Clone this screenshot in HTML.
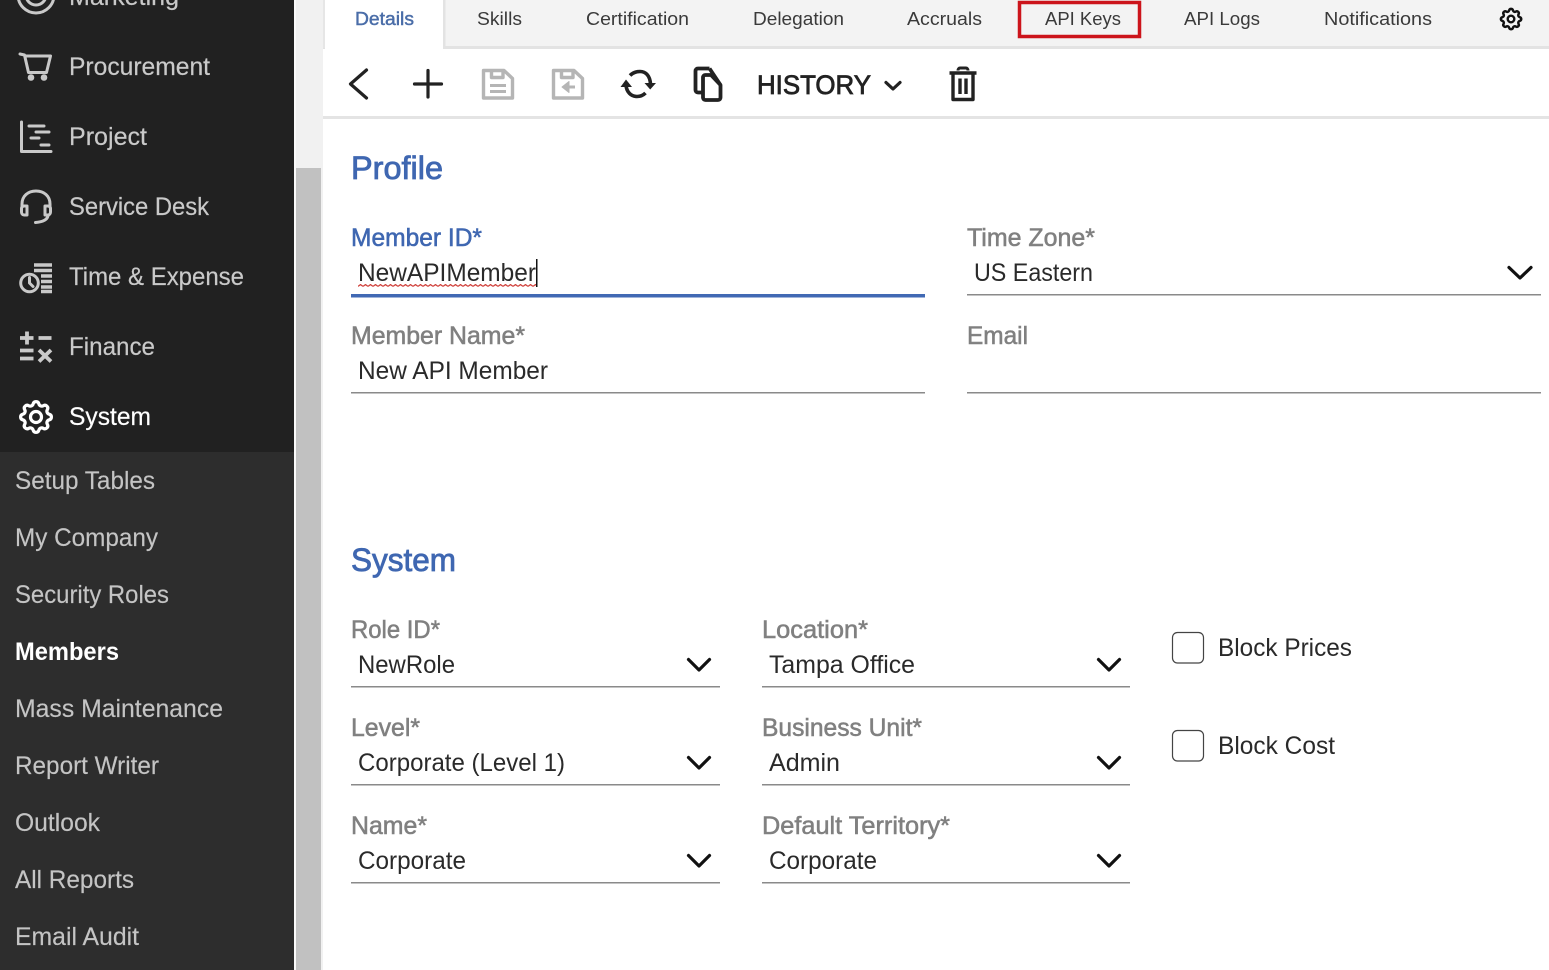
<!DOCTYPE html>
<html><head><meta charset="utf-8"><title>Members</title>
<style>
html,body{margin:0;padding:0;background:#fff;width:1549px;height:970px;overflow:hidden}
svg{display:block}
text{font-family:"Liberation Sans",Arial,sans-serif}
.nav{font-size:25px;fill:#c9c9c9;stroke:#c9c9c9;stroke-width:.2px}
.sub{font-size:25px;fill:#c4c4c4;stroke:#c4c4c4;stroke-width:.15px}
.tab{font-size:18.500px;fill:#3a3a3a}
.lab{font-size:25px;fill:#808080;stroke:#808080;stroke-width:.55px}
.val{font-size:25px;fill:#2a2a2a}
.h{font-size:32px;fill:#3f67b1;stroke:#3f67b1;stroke-width:.8px}
.ln{fill:#8a8a8a}
.chev{fill:none;stroke:#111;stroke-width:3.200;stroke-linecap:round;stroke-linejoin:round}
</style></head><body>
<svg xmlns="http://www.w3.org/2000/svg" width="1549" height="970" viewBox="0 0 1549 970">
<defs>
<path id="gear" d="M10.325 4.317c.426-1.756 2.924-1.756 3.35 0a1.724 1.724 0 0 0 2.573 1.066c1.543-.94 3.31.826 2.37 2.37a1.724 1.724 0 0 0 1.065 2.572c1.756.426 1.756 2.924 0 3.35a1.724 1.724 0 0 0-1.066 2.573c.94 1.543-.826 3.31-2.37 2.37a1.724 1.724 0 0 0-2.572 1.065c-.426 1.756-2.924 1.756-3.35 0a1.724 1.724 0 0 0-2.573-1.066c-1.543.94-3.31-.826-2.37-2.37a1.724 1.724 0 0 0-1.065-2.572c-1.756-.426-1.756-2.924 0-3.35a1.724 1.724 0 0 0 1.066-2.573c-.94-1.543.826-3.31 2.37-2.37c1 .608 2.296.07 2.572-1.065z"/>
<pattern id="sq" x="358" y="284" width="5" height="3" patternUnits="userSpaceOnUse"><path d="M0 2.400L2.500 .6L5 2.400" fill="none" stroke="#d0403a" stroke-width="1.300"/></pattern>
</defs>

<!-- sidebar -->
<rect x="0" y="0" width="294" height="970" fill="#212121"/>
<rect x="0" y="452" width="294" height="518" fill="#2d2d2d"/>
<!-- scrollbar -->
<rect x="294" y="0" width="29" height="970" fill="#f1f1f1"/>
<rect x="294" y="0" width="2" height="970" fill="#fafafa"/>
<rect x="296" y="168" width="25" height="802" fill="#c1c1c1"/>

<!-- sidebar icons -->
<g fill="none" stroke="#c9c9c9" stroke-width="3" stroke-linecap="round" stroke-linejoin="round">
  <circle cx="36" cy="-5" r="18"/><circle cx="36" cy="-5" r="10"/>
  <path d="M20 54L24.500 55L28.500 72.500H46.500L50.500 56H25"/>
  <path d="M21.500 122V151.500H51"/>
  <path d="M29 126H44M36 132H49M31 138H39M41 145H49"/>
  <path d="M22 207V204C22 196 28 191 36 191S50 196 50 204V207"/>
  <path d="M27 206H24C22.500 206 21.500 207 21.500 208.500V212C21.500 213.500 22.500 215 24 215H27Z"/>
  <path d="M45 206H48C49.500 206 50.500 207 50.500 208.500V212C50.500 213.500 49.500 215 48 215H45Z"/>
  <path d="M48 216C47 220 42 222 35.500 222.500"/>
  <circle cx="29.500" cy="283" r="8.800"/><path d="M29.500 277.500V283L33 286.500"/>
  <path d="M34 265H52M34 270.500H52M41 276H52M41 281.500H52M41 287H52M41 291.500H52" stroke-width="3.400" stroke-linecap="butt"/>
  <path d="M20 338H33.500M27 331.500V344.500M38.500 338H51.500M20 350.500H33.500M20 358.500H33.500M39 350L51 361.500M51 350L39 361.500" stroke-width="3.800" stroke-linecap="butt"/>
</g>
<circle cx="31" cy="77.500" r="3.300" fill="#c9c9c9"/>
<circle cx="44" cy="77.500" r="3.300" fill="#c9c9c9"/>
<use href="#gear" transform="translate(15.500 396.500) scale(1.71)" fill="none" stroke="#fff" stroke-width="1.900"/>
<circle cx="36" cy="417" r="5.500" fill="none" stroke="#fff" stroke-width="3.200"/>

<!-- sidebar text -->
<text class="nav" x="69" y="5" textLength="110" lengthAdjust="spacingAndGlyphs">Marketing</text>
<text class="nav" x="69" y="75" textLength="141" lengthAdjust="spacingAndGlyphs">Procurement</text>
<text class="nav" x="69" y="145" textLength="78" lengthAdjust="spacingAndGlyphs">Project</text>
<text class="nav" x="69" y="215" textLength="140" lengthAdjust="spacingAndGlyphs">Service Desk</text>
<text class="nav" x="69" y="285" textLength="175" lengthAdjust="spacingAndGlyphs">Time &amp; Expense</text>
<text class="nav" x="69" y="355" textLength="86" lengthAdjust="spacingAndGlyphs">Finance</text>
<text class="nav" x="69" y="425" textLength="82" lengthAdjust="spacingAndGlyphs" style="fill:#fff;stroke:#fff">System</text>

<text class="sub" x="15" y="489" textLength="140" lengthAdjust="spacingAndGlyphs">Setup Tables</text>
<text class="sub" x="15" y="546" textLength="143" lengthAdjust="spacingAndGlyphs">My Company</text>
<text class="sub" x="15" y="603" textLength="154" lengthAdjust="spacingAndGlyphs">Security Roles</text>
<text class="sub" x="15" y="660" textLength="104" lengthAdjust="spacingAndGlyphs" style="fill:#fff;stroke:none;font-weight:bold">Members</text>
<text class="sub" x="15" y="717" textLength="208" lengthAdjust="spacingAndGlyphs">Mass Maintenance</text>
<text class="sub" x="15" y="774" textLength="144" lengthAdjust="spacingAndGlyphs">Report Writer</text>
<text class="sub" x="15" y="831" textLength="85" lengthAdjust="spacingAndGlyphs">Outlook</text>
<text class="sub" x="15" y="888" textLength="119" lengthAdjust="spacingAndGlyphs">All Reports</text>
<text class="sub" x="15" y="945" textLength="124" lengthAdjust="spacingAndGlyphs">Email Audit</text>

<!-- tab bar -->
<rect x="323" y="0" width="1226" height="46" fill="#f3f3f3"/>
<rect x="323" y="46" width="1226" height="3" fill="#e3e3e3"/>
<rect x="323" y="0" width="2" height="48" fill="#e6e6e6"/>
<rect x="325" y="0" width="118" height="49" fill="#fff"/>
<rect x="443" y="0" width="2.500" height="49" fill="#e3e3e3"/>

<text class="tab" x="355" y="25" textLength="59" lengthAdjust="spacingAndGlyphs" style="fill:#4a6da8;stroke:#4a6da8;stroke-width:.45px">Details</text>
<text class="tab" x="477" y="25" textLength="45" lengthAdjust="spacingAndGlyphs">Skills</text>
<text class="tab" x="586" y="25" textLength="103" lengthAdjust="spacingAndGlyphs">Certification</text>
<text class="tab" x="753" y="25" textLength="91" lengthAdjust="spacingAndGlyphs">Delegation</text>
<text class="tab" x="907" y="25" textLength="75" lengthAdjust="spacingAndGlyphs">Accruals</text>
<text class="tab" x="1045" y="25" textLength="76" lengthAdjust="spacingAndGlyphs">API Keys</text>
<text class="tab" x="1184" y="25" textLength="76" lengthAdjust="spacingAndGlyphs">API Logs</text>
<text class="tab" x="1324" y="25" textLength="108" lengthAdjust="spacingAndGlyphs">Notifications</text>
<rect x="1019.500" y="2.500" width="120" height="34" fill="none" stroke="#cc141b" stroke-width="3.500"/>
<use href="#gear" transform="translate(1497.500 5.500) scale(1.13)" fill="none" stroke="#111" stroke-width="2.200"/>
<circle cx="1511" cy="19" r="3.300" fill="none" stroke="#111" stroke-width="2.400"/>

<!-- toolbar -->
<rect x="323" y="116" width="1226" height="3" fill="#e4e4e4"/>
<g fill="none" stroke="#222" stroke-width="3.200" stroke-linecap="round" stroke-linejoin="round">
  <path d="M366.500 70L350.500 84L366.500 98"/>
  <path d="M414.500 84H441.500M428 70.500V97"/>
</g>
<g fill="none" stroke="#b5b5b5" stroke-width="3.400" stroke-linejoin="round">
  <path d="M483.500 70.500H504L512.500 78.500V98H483.500Z"/>
  <path d="M491.500 71V77.500H503V71"/>
  <path d="M490 85.500H506M490 91.500H506" stroke-width="3"/>
  <path d="M553.500 70.500H574L582.500 78.500V98H553.500Z"/>
  <path d="M561.500 71V77.500H573V71"/>
  <path d="M575 87H564" stroke-width="3"/>
  <path d="M569 81.500L562 87L569 92.500Z" fill="#b5b5b5" stroke-width="1"/>
</g>
<g fill="none" stroke="#222" stroke-width="3.600">
  <path d="M630 75.500C633 72.500 637 71.500 640 71.500C646 71.500 650 76 650.500 84"/>
  <path d="M626 85C626.500 92 631 96.500 637 96.500C640 96.500 643 95.500 645.500 93"/>
</g>
<path d="M644.500 83H656L650.200 89.500Z" fill="#222"/>
<path d="M620.500 87H632L626 79.500Z" fill="#222"/>
<g fill="none" stroke="#222" stroke-width="3.800" stroke-linejoin="round">
  <path d="M703 92.500H698C696.500 92.500 695.500 91.500 695.500 90V71C695.500 69.500 696.500 68.500 698 68.500H709.500"/>
  <path d="M703 77.500C703 76 704 75 705.500 75H711L720.500 85V97.500C720.500 99 719.500 100 718 100H705.500C704 100 703 99 703 97.500Z"/>
  <path d="M709.500 68.500L720.500 85"/>
</g>
<text x="757" y="94" textLength="114" lengthAdjust="spacingAndGlyphs" style="font-size:27px;fill:#222;stroke:#222;stroke-width:.8px">HISTORY</text>
<path d="M886 82.500L893 89L900 82.500" fill="none" stroke="#222" stroke-width="3.200" stroke-linecap="round" stroke-linejoin="round"/>
<g fill="none" stroke="#222" stroke-width="3.400" stroke-linejoin="round">
  <path d="M953 73.500V99.500H973V73.500"/>
  <path d="M949.500 73H976.500" stroke-width="3.600"/>
  <path d="M958 70.500C958 69 959 68 960 68H966C967 68 968 69 968 70.500" stroke-width="3"/>
  <path d="M960 78.500V94M966 78.500V94"/>
</g>

<!-- Profile -->
<text class="h" x="351" y="179" textLength="92" lengthAdjust="spacingAndGlyphs">Profile</text>
<text class="lab" x="351" y="246" textLength="131" lengthAdjust="spacingAndGlyphs" style="fill:#3f67b1;stroke:#3f67b1">Member ID*</text>
<text class="lab" x="967" y="246" textLength="128" lengthAdjust="spacingAndGlyphs">Time Zone*</text>
<text class="val" x="358" y="281" textLength="178" lengthAdjust="spacingAndGlyphs">NewAPIMember</text>
<rect x="358" y="284" width="178" height="3" fill="url(#sq)"/>
<rect x="536" y="259" width="1.500" height="28" fill="#111"/>
<text class="val" x="974" y="281" textLength="119" lengthAdjust="spacingAndGlyphs">US Eastern</text>
<rect x="351" y="294" width="574" height="3.500" fill="#4169b4"/>
<rect class="ln" x="967" y="294" width="574" height="1.500"/>
<path class="chev" d="M1509 267.500L1520 278L1531 267.500"/>

<text class="lab" x="351" y="344" textLength="174" lengthAdjust="spacingAndGlyphs">Member Name*</text>
<text class="lab" x="967" y="344" textLength="61" lengthAdjust="spacingAndGlyphs">Email</text>
<text class="val" x="358" y="379" textLength="190" lengthAdjust="spacingAndGlyphs">New API Member</text>
<rect class="ln" x="351" y="392" width="574" height="1.500"/>
<rect class="ln" x="967" y="392" width="574" height="1.500"/>

<!-- System -->
<text class="h" x="351" y="571" textLength="105" lengthAdjust="spacingAndGlyphs">System</text>

<text class="lab" x="351" y="638" textLength="89" lengthAdjust="spacingAndGlyphs">Role ID*</text>
<text class="lab" x="762" y="638" textLength="106" lengthAdjust="spacingAndGlyphs">Location*</text>
<text class="val" x="358" y="673" textLength="97" lengthAdjust="spacingAndGlyphs">NewRole</text>
<text class="val" x="769" y="673" textLength="146" lengthAdjust="spacingAndGlyphs">Tampa Office</text>
<rect class="ln" x="351" y="686" width="369" height="1.500"/>
<rect class="ln" x="762" y="686" width="368" height="1.500"/>
<path class="chev" d="M688.500 659.500L699 670L709.500 659.500"/>
<path class="chev" d="M1098.500 659.500L1109 670L1119.500 659.500"/>

<text class="lab" x="351" y="736" textLength="69" lengthAdjust="spacingAndGlyphs">Level*</text>
<text class="lab" x="762" y="736" textLength="160" lengthAdjust="spacingAndGlyphs">Business Unit*</text>
<text class="val" x="358" y="771" textLength="207" lengthAdjust="spacingAndGlyphs">Corporate (Level 1)</text>
<text class="val" x="769" y="771" textLength="71" lengthAdjust="spacingAndGlyphs">Admin</text>
<rect class="ln" x="351" y="784" width="369" height="1.500"/>
<rect class="ln" x="762" y="784" width="368" height="1.500"/>
<path class="chev" d="M688.500 757.500L699 768L709.500 757.500"/>
<path class="chev" d="M1098.500 757.500L1109 768L1119.500 757.500"/>

<text class="lab" x="351" y="834" textLength="76" lengthAdjust="spacingAndGlyphs">Name*</text>
<text class="lab" x="762" y="834" textLength="188" lengthAdjust="spacingAndGlyphs">Default Territory*</text>
<text class="val" x="358" y="869" textLength="108" lengthAdjust="spacingAndGlyphs">Corporate</text>
<text class="val" x="769" y="869" textLength="108" lengthAdjust="spacingAndGlyphs">Corporate</text>
<rect class="ln" x="351" y="882" width="369" height="1.500"/>
<rect class="ln" x="762" y="882" width="368" height="1.500"/>
<path class="chev" d="M688.500 855.500L699 866L709.500 855.500"/>
<path class="chev" d="M1098.500 855.500L1109 866L1119.500 855.500"/>

<!-- checkboxes -->
<rect x="1172.500" y="632.500" width="31" height="30.500" rx="5" fill="#fff" stroke="#444" stroke-width="1.200"/>
<text class="val" x="1218" y="656" textLength="134" lengthAdjust="spacingAndGlyphs">Block Prices</text>
<rect x="1172.500" y="730.500" width="31" height="30.500" rx="5" fill="#fff" stroke="#444" stroke-width="1.200"/>
<text class="val" x="1218" y="754" textLength="117" lengthAdjust="spacingAndGlyphs">Block Cost</text>
</svg>
</body></html>
